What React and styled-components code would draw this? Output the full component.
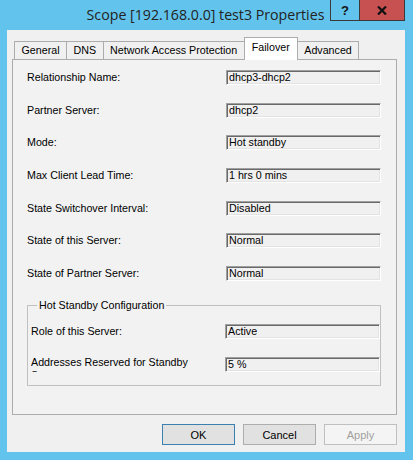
import React from 'react'
import styled, { createGlobalStyle } from 'styled-components'

const GlobalStyle = createGlobalStyle`
    html, body {
        margin: 0;
        padding: 0;
        background: #62c4ec;
    }
    * { box-sizing: border-box; }
`

const fields = [
    { label: 'Relationship Name:', value: 'dhcp3-dhcp2' },
    { label: 'Partner Server:', value: 'dhcp2' },
    { label: 'Mode:', value: 'Hot standby' },
    { label: 'Max Client Lead Time:', value: '1 hrs 0 mins' },
    { label: 'State Switchover Interval:', value: 'Disabled' },
    { label: 'State of this Server:', value: 'Normal' },
    { label: 'State of Partner Server:', value: 'Normal' },
]

const tabs = ['General', 'DNS', 'Network Access Protection', 'Failover', 'Advanced']

function App() {
    return (
        <Window>
            <GlobalStyle />
            <TitleBar>
                <Title>Scope [192.168.0.0] test3 Properties</Title>
                <CaptionButtons>
                    <CaptionButton>?</CaptionButton>
                    <CaptionButton $close>
                        <svg width="10" height="9" viewBox="0 0 10 9">
                            <path d="M1 0.5 L9 8.5 M9 0.5 L1 8.5" stroke="#111" strokeWidth="2.2" />
                        </svg>
                    </CaptionButton>
                </CaptionButtons>
            </TitleBar>
            <Client>
                <TabStrip>
                    {tabs.map(t => (
                        <Tab key={t} $active={t === 'Failover'}>{t}</Tab>
                    ))}
                </TabStrip>
                <Panel>
                    <FieldGrid>
                        {fields.map(f => (
                            <React.Fragment key={f.label}>
                                <Label>{f.label}</Label>
                                <ReadOnlyBox>{f.value}</ReadOnlyBox>
                            </React.Fragment>
                        ))}
                    </FieldGrid>
                    <GroupBox>
                        <legend>Hot Standby Configuration</legend>
                        <GroupGrid>
                            <Label>Role of this Server:</Label>
                            <ReadOnlyBox>Active</ReadOnlyBox>
                            <ClippedLabel>Addresses Reserved for Standby Server:</ClippedLabel>
                            <ReadOnlyBox>5 %</ReadOnlyBox>
                        </GroupGrid>
                    </GroupBox>
                </Panel>
                <ButtonRow>
                    <DialogButton $default>OK</DialogButton>
                    <DialogButton>Cancel</DialogButton>
                    <DialogButton disabled>Apply</DialogButton>
                </ButtonRow>
            </Client>
        </Window>
    )
}

const Window = styled.div`
    width: 413px;
    height: 460px;
    background: #62c4ec;
    display: flex;
    flex-direction: column;
    font-family: "Liberation Sans", Arial, sans-serif;
    font-size: 10.7px;
    color: #000;
`

const TitleBar = styled.div`
    height: 30px;
    display: flex;
    align-items: flex-start;
    flex-shrink: 0;
`

const Title = styled.div`
    flex: 1;
    padding-left: 81px;
    text-align: center;
    font-family: "Open Sans", "Noto Sans", sans-serif;
    font-size: 14.2px;
    line-height: 30px;
    color: #222;
    white-space: nowrap;
`

const CaptionButtons = styled.div`
    display: flex;
    margin-right: 8px;
    border: 1px solid #3a3a3a;
    border-top: none;
`

const CaptionButton = styled.div`
    width: ${p => p.$close ? '45px' : '28px'};
    height: 20px;
    display: flex;
    align-items: center;
    justify-content: center;
    background: ${p => p.$close ? '#c75050' : '#62c4ec'};
    border-left: ${p => p.$close ? '1px solid #3a3a3a' : 'none'};
    font-family: "Liberation Sans", Arial, sans-serif;
    font-weight: bold;
    font-size: 13px;
    color: #111;
`

const Client = styled.div`
    flex: 1;
    margin: 0 8px 8px 7px;
    background: #f0f0f0;
    padding: 7px 8px 0 5px;
    display: flex;
    flex-direction: column;
`

const TabStrip = styled.div`
    height: 22px;
    display: flex;
    align-items: flex-end;
    padding-left: 2px;
    position: relative;
    z-index: 2;
`

const Tab = styled.div`
    height: ${p => p.$active ? '23px' : '18px'};
    margin-bottom: ${p => p.$active ? '-1px' : '0'};
    margin-left: -1px;
    padding: ${p => p.$active ? '3px 7px 0' : '2px 6.5px 0'};
    background: ${p => p.$active ? '#ffffff' : '#f0f0f0'};
    border: 1px solid #acacac;
    border-bottom: none;
    white-space: nowrap;
    line-height: 13px;
    color: #000;
    &:first-child { margin-left: 0; }
`

const Panel = styled.div`
    height: 356px;
    border: 1px solid #acacac;
    background: #f2f2f2;
    padding: 1px 15px 0 14px;
`

const FieldGrid = styled.div`
    display: grid;
    grid-template-columns: 1fr 155px;
    grid-auto-rows: 32.7px;
    align-items: center;
`

const Label = styled.div`
    white-space: nowrap;
    line-height: 13px;
`

const ClippedLabel = styled.div`
    align-self: start;
    margin-top: 8.5px;
    width: 170px;
    height: 16px;
    overflow: hidden;
    line-height: 13px;
`

const ReadOnlyBox = styled.div`
    height: 15px;
    line-height: 13px;
    padding: 0 2px 0 2px;
    background: #f0f0f0;
    border-top: 1px solid #a0a0a0;
    border-left: 1px solid #a0a0a0;
    border-right: 1px solid #ffffff;
    border-bottom: 1px solid #ffffff;
    box-shadow: inset 1px 1px 0 #696969, inset -1px -1px 0 #e3e3e3;
    white-space: nowrap;
    overflow: hidden;
`

const GroupBox = styled.fieldset`
    margin: 9px 0 0 0;
    padding: 3px 0 4px 3px;
    border: 1px solid #c0c0c0;
    min-width: 0;
    legend {
        margin-left: 6px;
        padding: 0 2px;
        line-height: 13px;
    }
`

const GroupGrid = styled.div`
    display: grid;
    grid-template-columns: 1fr 155px;
    grid-auto-rows: 33px;
    align-items: center;
`

const ButtonRow = styled.div`
    display: flex;
    justify-content: flex-end;
    gap: 8px;
    margin-top: 9px;
`

const DialogButton = styled.button`
    width: 73px;
    height: 21px;
    padding: 0;
    font-family: "Liberation Sans", Arial, sans-serif;
    font-size: 11px;
    color: #000;
    background: #e1e1e1;
    border: 1px solid ${p => p.$default ? '#3c7fb1' : '#adadad'};
    &:disabled {
        background: #f4f4f4;
        border-color: #bfbfbf;
        color: #a0a0a0;
    }
`

export default App
